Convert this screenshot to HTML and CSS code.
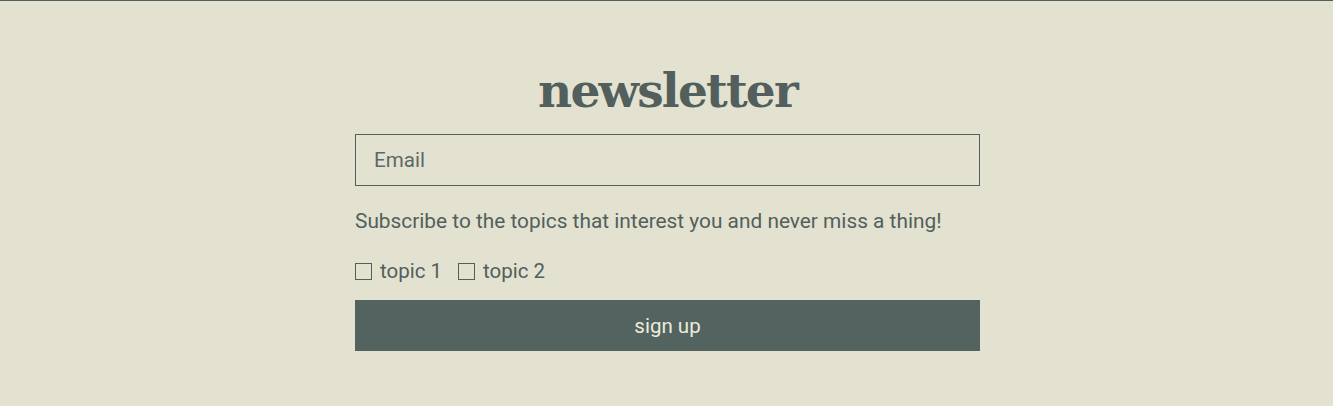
FILE: index.html
```html
<!DOCTYPE html>
<html lang="en">
<head>
<meta charset="utf-8">
<title>Newsletter</title>
<link rel="stylesheet" href="styles.css">
</head>
<body>
<div class="topline"></div>
<main class="wrap">
  <form class="newsletter">
    <h1 class="title">newsletter</h1>
    <input class="email" type="email" placeholder="Email">
    <p class="lead">Subscribe to the topics that interest you and never miss a thing!</p>
    <div class="topics">
      <label class="topic"><span class="box"></span>topic 1</label>
      <label class="topic"><span class="box"></span>topic 2</label>
    </div>
    <button class="submit" type="button">sign up</button>
  </form>
</main>
</body>
</html>
```
FILE: styles.css
```css
html, body {
  margin: 0;
  padding: 0;
}
body {
  background: #e3e2d0;
  color: #525f5c;
  font-family: Roboto, "Liberation Sans", sans-serif;
  height: 406px;
  overflow: hidden;
}
.topline {
  height: 1px;
  background: #525f5c;
}
.wrap {
  padding-left: 2px;
}
.newsletter {
  width: 625px;
  display: flex;
  flex-direction: column;
  margin: 58px auto 0;
}
.title {
  margin: 0;
  text-align: center;
  font-family: "DejaVu Serif", "Liberation Serif", serif;
  font-weight: bold;
  font-size: 47px;
  line-height: 64px;
  color: #525f5c;
  letter-spacing: -1.8px;
}
.email {
  margin-top: 11px;
  height: 52px;
  box-sizing: border-box;
  border: 1px solid #525f5c;
  background: transparent;
  padding: 0 18px;
  font-family: inherit;
  font-size: 20.6px;
  color: #525f5c;
  outline: none;
}
.email::placeholder {
  color: #5d6966;
  opacity: 1;
}
.lead {
  margin: 22px 0 0;
  font-size: 20.85px;
  line-height: 26px;
}
.topics {
  display: flex;
  gap: 16px;
  margin-top: 26px;
  font-size: 20.5px;
  line-height: 22px;
}
.topic {
  display: flex;
  align-items: center;
  gap: 8px;
}
.box {
  width: 17px;
  height: 17px;
  box-sizing: border-box;
  border: 1px solid #525f5c;
}
.submit {
  margin-top: 18px;
  height: 51px;
  border: 0;
  background: #536360;
  color: #ecebdc;
  font-family: inherit;
  font-size: 20.5px;
}
```
